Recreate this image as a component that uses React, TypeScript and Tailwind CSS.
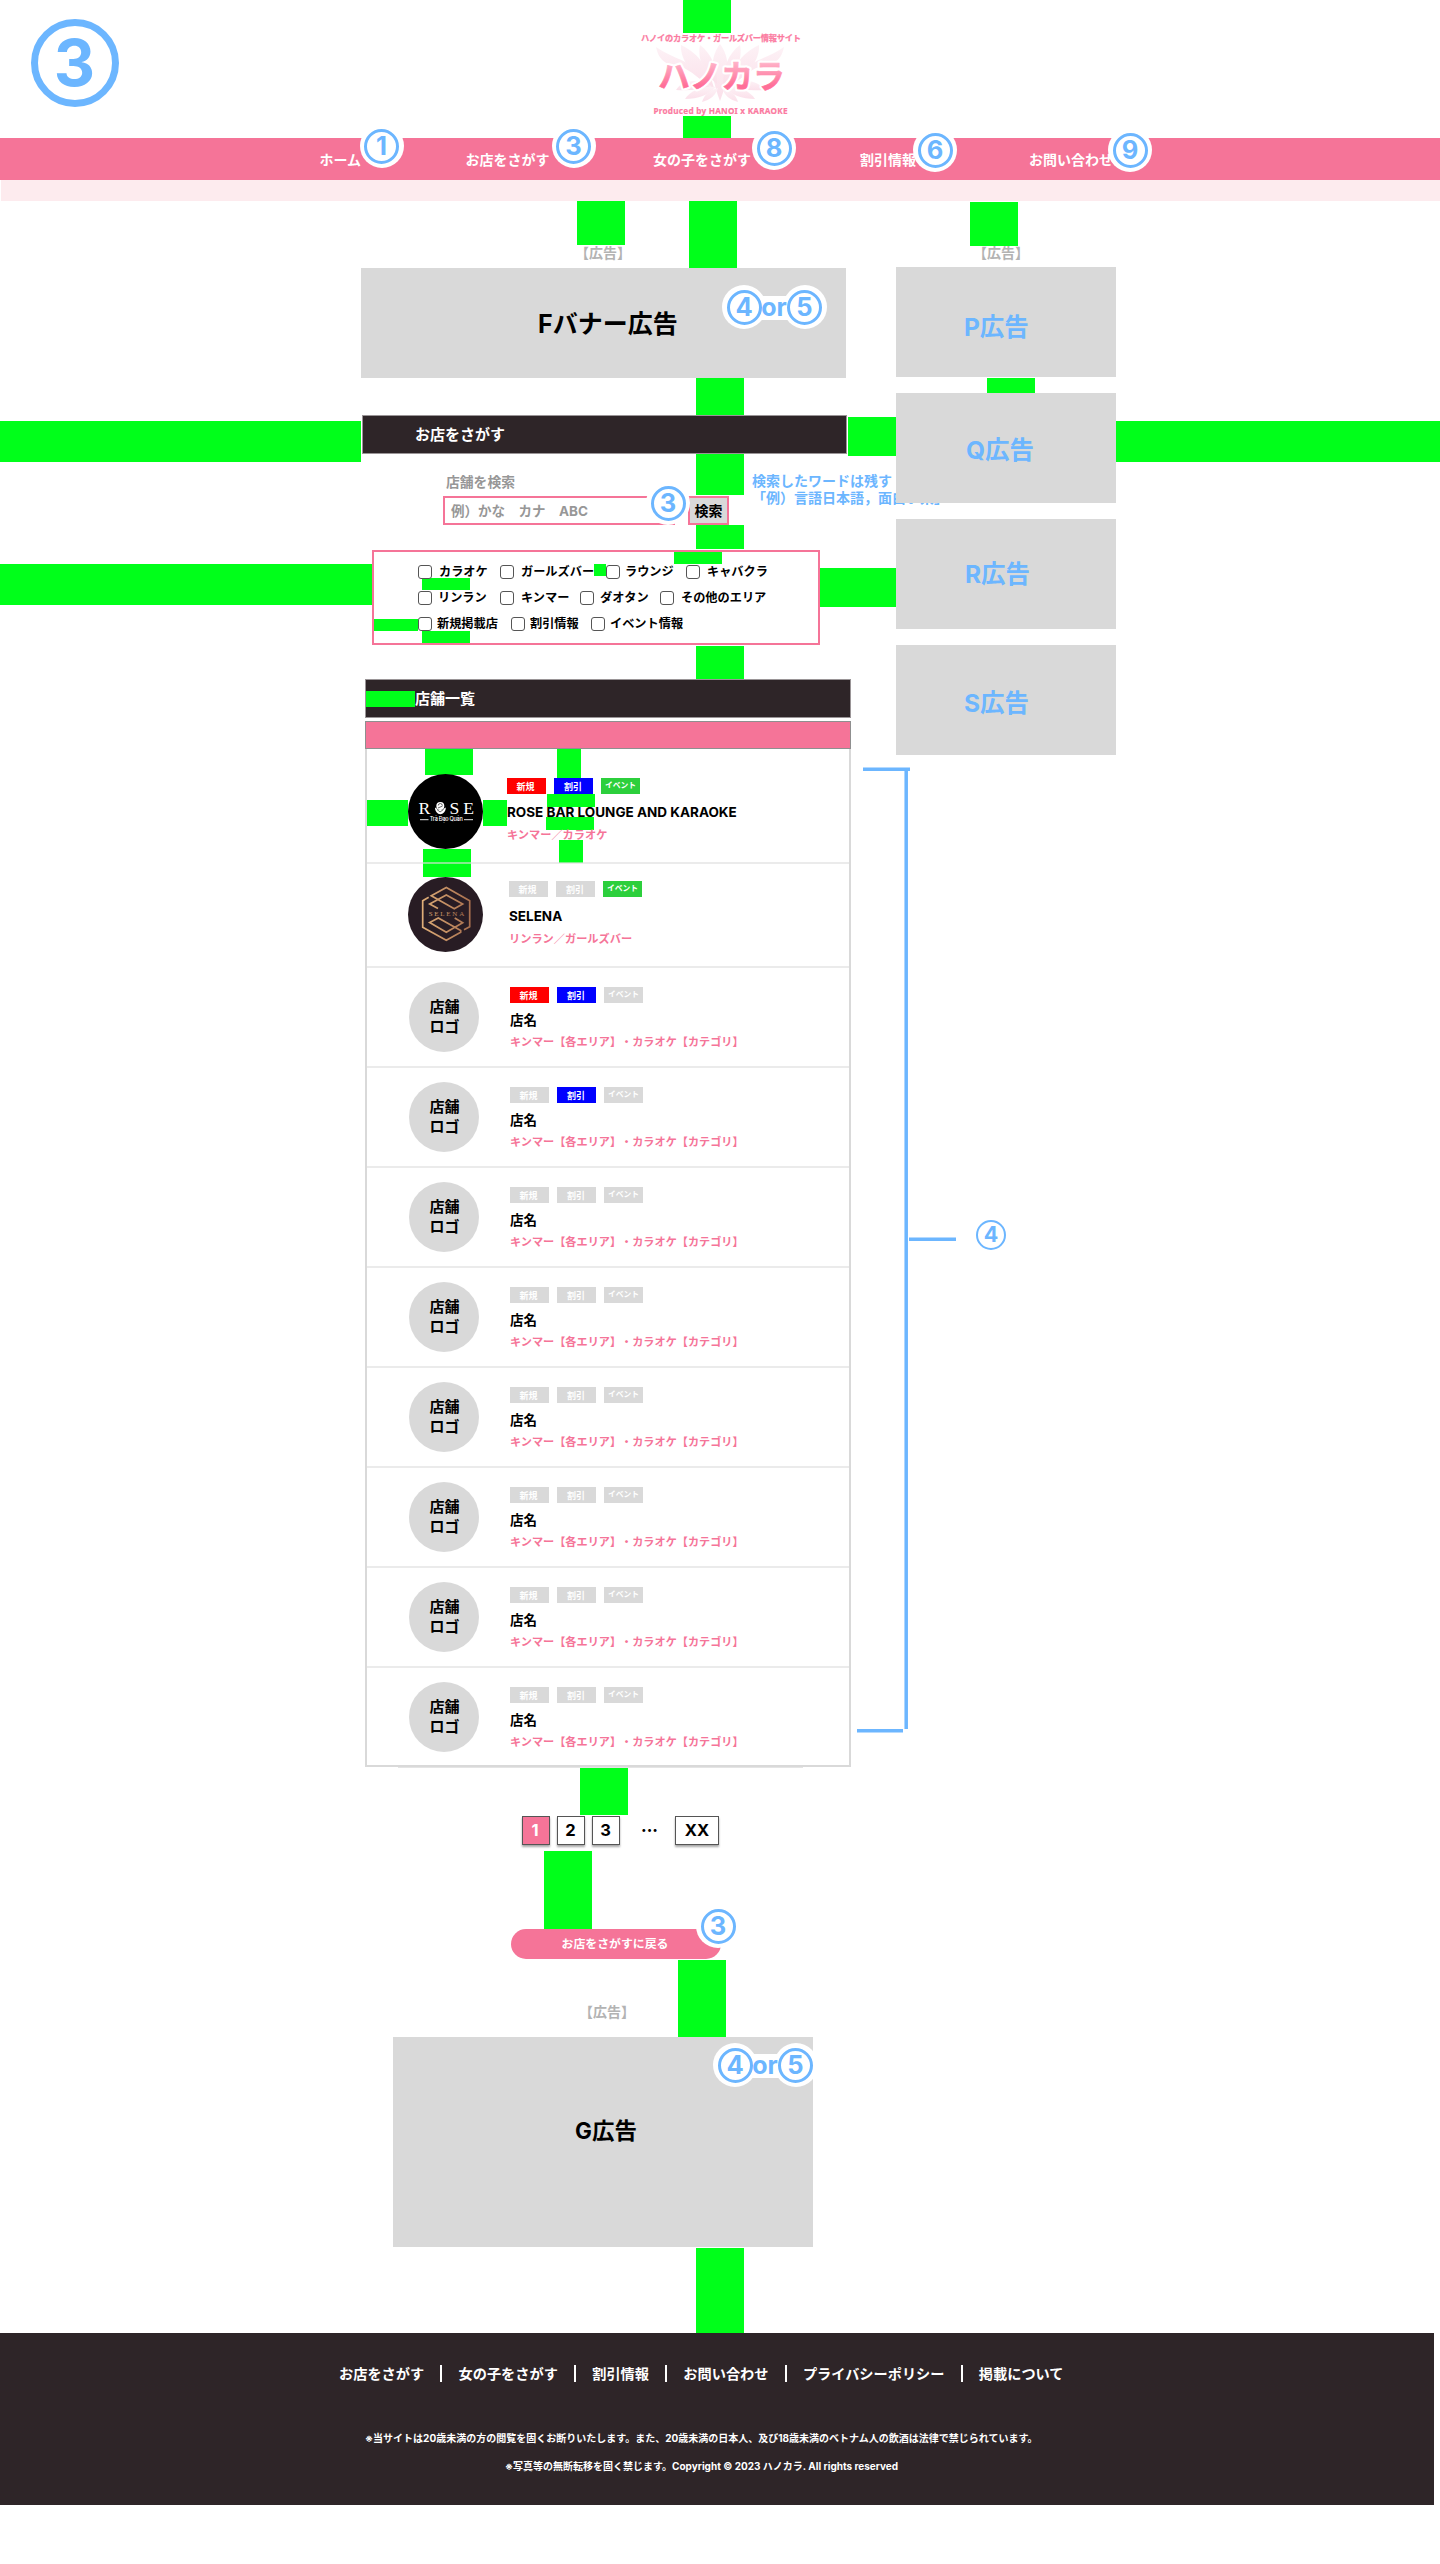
import React from "react";

const FONT = "font-['Inter','Noto_Sans_CJK_JP',sans-serif]";

/* Spacing guides laid over the page */
const guides = [
  "left-[683px] top-0 w-[48px] h-[33px]",
  "left-[683px] top-[116px] w-[48px] h-[22px]",
  "left-[577px] top-[201px] w-[48px] h-[44px]",
  "left-[689px] top-[201px] w-[48px] h-[67px]",
  "left-[970px] top-[202px] w-[48px] h-[44px]",
  "left-[987px] top-[378px] w-[48px] h-[15px]",
  "left-[696px] top-[377px] w-[48px] h-[38px]",
  "left-0 top-[421px] w-[361px] h-[41px]",
  "left-[848px] top-[417px] w-[48px] h-[39px]",
  "left-[1116px] top-[421px] w-[324px] h-[41px]",
  "left-[696px] top-[454px] w-[48px] h-[41px]",
  "left-[696px] top-[525px] w-[48px] h-[24px]",
  "left-0 top-[564px] w-[372px] h-[41px]",
  "left-[820px] top-[568px] w-[76px] h-[39px]",
  "left-[674px] top-[552px] w-[48px] h-[12px]",
  "left-[422px] top-[578px] w-[48px] h-[12px]",
  "left-[594px] top-[564px] w-[12px] h-[12px]",
  "left-[374px] top-[619px] w-[44px] h-[12px]",
  "left-[422px] top-[631px] w-[48px] h-[12px]",
  "left-[696px] top-[646px] w-[48px] h-[33px]",
  "left-[425px] top-[749px] w-[48px] h-[26px]",
  "left-[557px] top-[749px] w-[24px] h-[29px]",
  "left-[365px] top-[800px] w-[43px] h-[26px]",
  "left-[483px] top-[800px] w-[24px] h-[26px]",
  "left-[547px] top-[794px] w-[48px] h-[13px]",
  "left-[546px] top-[817px] w-[48px] h-[13px]",
  "left-[559px] top-[840px] w-[24px] h-[23px]",
  "left-[423px] top-[849px] w-[48px] h-[28px]",
  "left-[580px] top-[1768px] w-[48px] h-[47px]",
  "left-[544px] top-[1851px] w-[48px] h-[78px]",
  "left-[678px] top-[1960px] w-[48px] h-[78px]",
  "left-[696px] top-[2248px] w-[48px] h-[85px]",
];

function Ring({ n, className = "" }: { n: string; className?: string }) {
  return (
    <span className={`absolute z-20 flex size-11 items-center justify-center rounded-full bg-white ${className}`}>
      <span className="flex size-[35px] items-center justify-center rounded-full border-[3px] border-[#6cb6ff] text-[25.5px] leading-none font-bold text-[#6cb6ff]">
        {n}
      </span>
    </span>
  );
}

function FourOrFive({ className }: { className: string }) {
  return (
    <div className={`absolute z-10 h-11 w-[105px] ${className}`}>
      <span className="absolute top-[11px] left-[34px] h-[24px] w-[36px] bg-white" />
      <Ring n="4" className="left-0 top-0" />
      <Ring n="5" className="left-[60.5px] top-0" />
      <span className="absolute top-[6px] left-[36px] z-30 w-[32px] text-center text-[25px] leading-[32px] font-bold text-[#6cb6ff]">
        or
      </span>
    </div>
  );
}

function Logo() {
  return (
    <svg className="absolute left-[640px] top-[30px] z-10" width="164" height="88" viewBox="640 30 164 88">
      <defs>
        <linearGradient id="word" x1="0" y1="0" x2="0" y2="1">
          <stop offset="0.2" stopColor="#ffb9cd" />
          <stop offset="0.75" stopColor="#ff6f98" />
        </linearGradient>
        <linearGradient id="petal" x1="0" y1="0" x2="0" y2="1">
          <stop offset="0" stopColor="#fdf2f6" />
          <stop offset="1" stopColor="#fbe0ea" />
        </linearGradient>
      </defs>
      <g fill="url(#petal)">
        <path d="M720 44C711 56 709 72 720 101C731 72 729 56 720 44Z" />
        <path d="M700 45C697 60 705 75 717 84C717 68 712 54 700 45Z" />
        <path d="M740 45C743 60 735 75 723 84C723 68 728 54 740 45Z" />
        <path d="M681 45C680 60 692 76 714 88C709 70 700 54 681 45Z" />
        <path d="M759 45C760 60 748 76 726 88C731 70 740 54 759 45Z" />
        <path d="M656 47C660 66 672 64 684 68C696 74 704 84 714 88C704 64 674 60 656 47Z" />
        <path d="M784 47C780 66 768 64 756 68C744 74 736 84 726 88C736 64 766 60 784 47Z" />
        <path d="M676 90C688 91 700 90 712 86C698 78 682 80 676 90Z" />
        <path d="M764 90C752 91 740 90 728 86C742 78 758 80 764 90Z" />
        <path d="M685 99C698 99 709 95 716 87C702 86 690 91 685 99Z" />
        <path d="M755 99C742 99 731 95 724 87C738 86 750 91 755 99Z" />
        <path d="M702 102C710 100 716 95 718 88C709 90 704 95 702 102Z" />
        <path d="M738 102C730 100 724 95 722 88C731 90 736 95 738 102Z" />
      </g>
      <g className="font-['Noto_Sans_CJK_JP',sans-serif] font-bold">
        <text x="641" y="41.3" fontSize="8.2" textLength="160" fill="#fb7a9f" stroke="#fb7a9f" strokeWidth=".25">ハノイのカラオケ・ガールズバー情報サイト</text>
        <text x="658" y="88" fontSize="32" textLength="127" fill="#fff" stroke="#fff" strokeWidth="5" strokeLinejoin="round" aria-hidden="true">
          ハノカラ
        </text>
        <text x="658" y="88" fontSize="32" textLength="127" fill="url(#word)" stroke="url(#word)" strokeWidth=".6">
          ハノカラ
        </text>
      </g>
      <text x="653.5" y="113.5" fontSize="8.2" textLength="134" fill="#fb7a9f" stroke="#fb7a9f" strokeWidth=".2" className="font-['Noto_Sans',sans-serif] font-bold">
        Produced by HANOI x KARAOKE
      </text>
    </svg>
  );
}

const nav = [
  { label: "ホーム", cell: "ml-[319.5px] w-[146px]", n: "1", ring: "left-[40px] -top-[14px]" },
  { label: "お店をさがす", cell: "w-[187.5px]", n: "3", ring: "left-[86px] -top-[14px]" },
  { label: "女の子をさがす", cell: "w-[207px]", n: "8", ring: "left-[99px] -top-[12px]" },
  { label: "割引情報", cell: "w-[169px]", n: "6", ring: "left-[53px] -top-[10px]" },
  { label: "お問い合わせ", cell: "w-[120px]", n: "9", ring: "left-[79px] -top-[10px]" },
];

const filters = [
  [
    ["カラオケ", "w-[82px] gap-[7px]"],
    ["ガールズバー", "w-[106px] gap-[7px]"],
    ["ラウンジ", "w-[80px] gap-[5px]"],
    ["キャバクラ", "w-[90px] gap-[7px]"],
  ],
  [
    ["リンラン", "w-[82px] gap-[6px]"],
    ["キンマー", "w-[80px] gap-[7px]"],
    ["ダオタン", "w-[80px] gap-[6px]"],
    ["その他のエリア", "w-[110px] gap-[7px]"],
  ],
  [
    ["新規掲載店", "w-[93px] gap-[5px]"],
    ["割引情報", "w-[80px] gap-[5px]"],
    ["イベント情報", "w-[110px] gap-[5px]"],
  ],
];

function Tags({ on }: { on: boolean[] }) {
  const base = "flex h-4 w-[39px] items-center justify-center leading-none font-bold text-white";
  return (
    <div className="flex gap-2">
      <span className={`${base} pr-[2px] text-[9px] ${on[0] ? "bg-[#ff0000]" : "bg-[#d9d9d9]"}`}>新規</span>
      <span className={`${base} pr-px text-[9px] ${on[1] ? "bg-[#0000ff]" : "bg-[#d9d9d9]"}`}>割引</span>
      <span className={`${base} text-[7.8px] ${on[2] ? "bg-[#2ccf3c]" : "bg-[#d9d9d9]"}`}>イベント</span>
    </div>
  );
}

function RoseLogo() {
  return (
    <svg className="size-[75px]" viewBox="0 0 75 75">
      <circle cx="37.5" cy="37.5" r="37.5" fill="#000" />
      <g fill="#fff" className="font-['Liberation_Serif',serif]">
        <text x="10.4" y="40" fontSize="17.6">R</text>
        <text x="41.5" y="40" fontSize="17.6">S</text>
        <text x="55.2" y="40" fontSize="17.6">E</text>
      </g>
      <g fill="#fff">
        <circle cx="32.3" cy="32" r="4" />
        <path d="M27 33.500c0 4 2.500 6.500 5.300 6.800c3-.3 5.500-2.800 5.500-6.800c-2 1-3 2.500-5.500 2.500s-3.300-1.500-5.300-2.500z" />
      </g>
      <path d="M30.300 31.500a2 2 0 0 1 4 0M30 34l4.500-2M29 35.500l3 2.500l3.500-2.500" stroke="#000" strokeWidth=".6" fill="none" />
      <path d="M12 45.700h8.500M56 45.700h9" stroke="#fff" strokeWidth=".9" />
      <text x="21.8" y="47.300" fontSize="5.500" textLength="33" fill="#fff" className="font-['Inter',sans-serif] font-medium">Trà Đạo Quán</text>
    </svg>
  );
}

function SelenaLogo() {
  return (
    <svg className="size-[75px]" viewBox="0 0 75 75">
      <defs>
        <linearGradient id="gold" gradientUnits="userSpaceOnUse" x1="14" y1="0" x2="62" y2="0">
          <stop offset="0" stopColor="#dfae78" />
          <stop offset="1" stopColor="#a9704f" />
        </linearGradient>
      </defs>
      <circle cx="37.5" cy="37.5" r="37.5" fill="#281c24" />
      <g fill="none" stroke="url(#gold)" strokeWidth="1.7">
        <path d="M56 52.700L61.700 49.700V23.700L38.300 10.500L23.300 18.700L46.300 31.700L54.700 27L38.300 17.900L21.700 27L30 31.500" />
        <path d="M20.700 20.300L14.700 23.700V50.300L38.300 63.300L52.700 55.300V53.500L30.300 41L21.700 45.500L38.300 55.300L54.700 45.700L46.700 40.900" />
      </g>
      <text x="20.700" y="39" fontSize="7" textLength="35.500" fill="url(#gold)" className="font-['Liberation_Serif',serif]">SELENA</text>
    </svg>
  );
}

const shops = [
  { on: [true, true, false] },
  { on: [false, true, false] },
  ...Array.from({ length: 6 }, () => ({ on: [false, false, false] })),
];

function AdLabel({ className }: { className: string }) {
  return <div className={`text-[14px] leading-4 font-bold text-[#b3b3b3] ${className}`}>【広告】</div>;
}

function SideAd({ label, className }: { label: string; className: string }) {
  return (
    <div className={`relative z-20 h-[110px] w-[220px] bg-[#d9d9d9] text-[24.5px] leading-8 font-bold text-[#6cb6ff] ${className}`}>
      {label}
    </div>
  );
}

const pageBtn =
  "flex h-[29px] items-center justify-center border border-[#555] pb-px text-[16.5px] font-bold leading-none shadow-[0_2px_2px_rgba(0,0,0,0.35)]";

const footerLinks = ["お店をさがす", "女の子をさがす", "割引情報", "お問い合わせ", "プライバシーポリシー", "掲載について"];

export default function App() {
  return (
    <div
      className={`relative isolate h-[2564px] w-[1440px] overflow-hidden bg-white text-black whitespace-nowrap [text-spacing-trim:space-all] ${FONT}`}
    >
      {guides.map((g) => (
        <i key={g} className={`absolute -z-10 bg-[#00ff1a] ${g}`} />
      ))}

      <header className="relative h-[138px]">
        <div className="absolute left-[31px] top-[19px] flex size-[88px] items-center justify-center rounded-full border-[7px] border-[#6cb6ff] pr-px text-[64px] leading-none font-bold text-[#6cb6ff]">
          3
        </div>
        <Logo />
      </header>

      <nav className="flex h-[42px] bg-[#f57498] text-[14px] leading-[43px] font-bold text-white">
        {nav.map((n) => (
          <div key={n.label} className={`relative h-[42px] ${n.cell}`}>
            {n.label}
            <Ring n={n.n} className={n.ring} />
          </div>
        ))}
      </nav>
      <div className="ml-px h-[21px] bg-[#fdebee]" />

      <main className="flex h-[2132px]">
        <div className="ml-[361px] w-[490px] shrink-0">
          <AdLabel className="h-[67px] pl-[214px] pt-[44px]" />
          <div className="relative h-[110px] w-[485px] bg-[#d9d9d9] pl-[177px] pt-[40px] text-[25px] leading-8 font-bold">
            Fバナー広告
            <FourOrFive className="left-[361px] top-[17px]" />
          </div>

          <h2 className="mt-[37px] ml-px h-[39px] w-[485px] border border-[#9a9597] bg-[#2e2528] pl-[52px] text-[15px] leading-[38px] font-bold text-white">
            お店をさがす
          </h2>

          <section className="relative h-[96px] pl-[82px] pt-[20px]">
            <p className="pl-[3px] text-[13.8px] leading-[16px] font-bold text-[#979797]">店舗を検索</p>
            <div className="mt-[6px] flex">
              <div className="h-[29px] w-[232px] border-2 border-[#f57498] pl-[6px] text-[13.5px] leading-[26px] font-bold text-[#979797]">
                例）かな　カナ　ABC
              </div>
              <button className="ml-[13px] h-[29px] w-[41px] border-2 border-[#f57498] bg-[#d9d9d9] text-[14px] leading-[25px] font-bold">
                検索
              </button>
            </div>
            <Ring n="3" className="left-[285px] top-[27px]" />
            <p className="absolute left-[391px] top-[18px] text-[14px] leading-[17px] font-bold text-[#6cb6ff]">
              検索したワードは残す
              <br />
              「例）言語日本語，面白い系」
            </p>
          </section>

          <section className="ml-[11px] h-[95px] w-[448px] border-2 border-[#f57498] pl-[44px] pt-[12px]">
            {filters.map((row, i) => (
              <div key={i} className="flex h-[26px]">
                {row.map(([label, cls]) => (
                  <label key={label} className={`flex h-[15px] items-center text-[12.2px] leading-none font-bold ${cls}`}>
                    <span className="h-[14px] w-[14px] shrink-0 rounded-[3px] border border-[#555] bg-white" />
                    <span className="pt-px">{label}</span>
                  </label>
                ))}
              </div>
            ))}
          </section>

          <h2 className="mt-[34px] ml-[4px] flex h-[39px] w-[486px] items-center border border-[#9a9597] bg-[#2e2528] text-[15px] leading-none font-bold text-white">
            <i className="h-4 w-[49px] bg-[#00ff1a]" />
            店舗一覧
          </h2>
          <div className="mt-[3px] ml-[4px] h-[28px] w-[486px] border border-[#8f8f8f] bg-[#f57498]" />

          <ul className="ml-[4px] h-[1018px] w-[486px] border-2 border-t-0 border-[#d9d9d9]">
            <li className="flex h-[115px] border-b-2 border-[#dddddd]/60 pl-[41px] pt-[25px]">
              <RoseLogo />
              <div className="ml-[24px] pt-[4px]">
                <Tags on={[true, true, true]} />
                <p className="mt-[10px] text-[13.5px] leading-4 font-bold">ROSE BAR LOUNGE AND KARAOKE</p>
                <p className="mt-[7px] text-[11.2px] leading-4 font-bold text-[#f57498]">キンマー／カラオケ</p>
              </div>
            </li>
            <li className="flex h-[104px] border-b-2 border-[#dddddd]/60 pl-[41px] pt-[13px]">
              <SelenaLogo />
              <div className="ml-[26px] pt-[4px]">
                <Tags on={[false, false, true]} />
                <p className="mt-[11px] text-[13.5px] leading-4 font-bold">SELENA</p>
                <p className="mt-[7px] text-[11.2px] leading-4 font-bold text-[#f57498]">リンラン／ガールズバー</p>
              </div>
            </li>
            {shops.map((s, i) => (
              <li
                key={i}
                className="flex h-[100px] border-b-2 border-[#dddddd]/60 pl-[42px] pt-[14px] last:h-[97px] last:border-b-0"
              >
                <div className="flex size-[70px] items-center justify-center rounded-full bg-[#d9d9d9] pl-px text-center text-[15px] leading-5 font-bold">
                  店舗
                  <br />
                  ロゴ
                </div>
                <div className="ml-[31px] pt-[5px]">
                  <Tags on={s.on} />
                  <p className="mt-[9px] text-[13.5px] leading-4 font-bold">店名</p>
                  <p className="mt-[6px] text-[11.15px] leading-4 font-bold text-[#f57498]">
                    キンマー【各エリア】・カラオケ【カテゴリ】
                  </p>
                </div>
              </li>
            ))}
          </ul>
          <div className="ml-[37px] h-px w-[405px] bg-[#e4e4e4]" />

          <div className="mt-[48px] ml-[161px] flex">
            <span className={`${pageBtn} w-7 bg-[#f57498] pr-[2px] text-white`}>1</span>
            <span className={`${pageBtn} ml-[7px] w-7 bg-white pr-px`}>2</span>
            <span className={`${pageBtn} ml-[7px] w-7 bg-white pr-px`}>3</span>
            <span className="ml-[21px] w-[16px] text-center text-[16px] leading-[29px] font-extrabold">···</span>
            <span className={`${pageBtn} ml-[18px] w-[44px] bg-white`}>XX</span>
          </div>

          <div className="relative mt-[84px] ml-[150px] h-[30px] w-[210px] rounded-full bg-[#f57498] pr-[2px] text-center text-[11.9px] leading-[29px] font-bold text-white">
            お店をさがすに戻る
            <Ring n="3" className="left-[185px] -top-[25px]" />
          </div>

          <AdLabel className="h-[78px] pl-[218px] pt-[45px]" />
          <div className="relative ml-[32px] h-[210px] w-[420px] bg-[#d9d9d9] pl-[182px] pt-[78px] text-[22.5px] leading-8 font-bold">
            G広告
            <FourOrFive className="left-[320px] top-[6px]" />
          </div>
        </div>

        <aside className="ml-[45px]">
          <AdLabel className="h-[66px] pl-[77px] pt-[44px]" />
          <SideAd label="P広告" className="pl-[68px] pt-[44px]" />
          <SideAd label="Q広告" className="mt-4 pl-[70px] pt-[41px]" />
          <SideAd label="R広告" className="mt-4 pl-[69px] pt-[39px]" />
          <SideAd label="S広告" className="mt-4 pl-[68px] pt-[42px]" />
        </aside>
      </main>

      {/* Bracket note for the shop list */}
      <svg
        className="absolute left-[856px] top-[766px]"
        width="102"
        height="968"
        viewBox="856 766 102 968"
        stroke="#6cb6ff"
        strokeWidth="3.5"
        fill="none"
      >
        <path d="M863 769.200H910M906.200 771V1729M909 1239.200H956M857 1730.700H903" />
      </svg>
      <span className="absolute left-[976px] top-[1220px] flex size-[30px] items-center justify-center rounded-full border-2 border-[#6cb6ff] text-[21.5px] leading-none font-bold text-[#6cb6ff]">
        4
      </span>

      <footer className="h-[172px] w-[1434px] bg-[#2e2528] pt-[32px] font-bold text-white">
        <div className="ml-[339px] flex h-[17px] items-center text-[14.2px] leading-[17px]">
          {footerLinks.map((l, i) => (
            <React.Fragment key={l}>
              {i > 0 && <i className="mx-[16.2px] h-[17px] w-[2px] bg-white" />}
              <span>{l}</span>
            </React.Fragment>
          ))}
        </div>
        <p className="mt-[48px] ml-[365px] text-[10px] leading-4">
          ※当サイトは20歳未満の方の閲覧を固くお断りいたします。また、20歳未満の日本人、及び18歳未満のベトナム人の飲酒は法律で禁じられています。
        </p>
        <p className="mt-[12px] ml-[505px] text-[10px] leading-4">
          ※写真等の無断転移を固く禁じます。Copyright © 2023 ハノカラ. All rights reserved
        </p>
      </footer>
    </div>
  );
}
